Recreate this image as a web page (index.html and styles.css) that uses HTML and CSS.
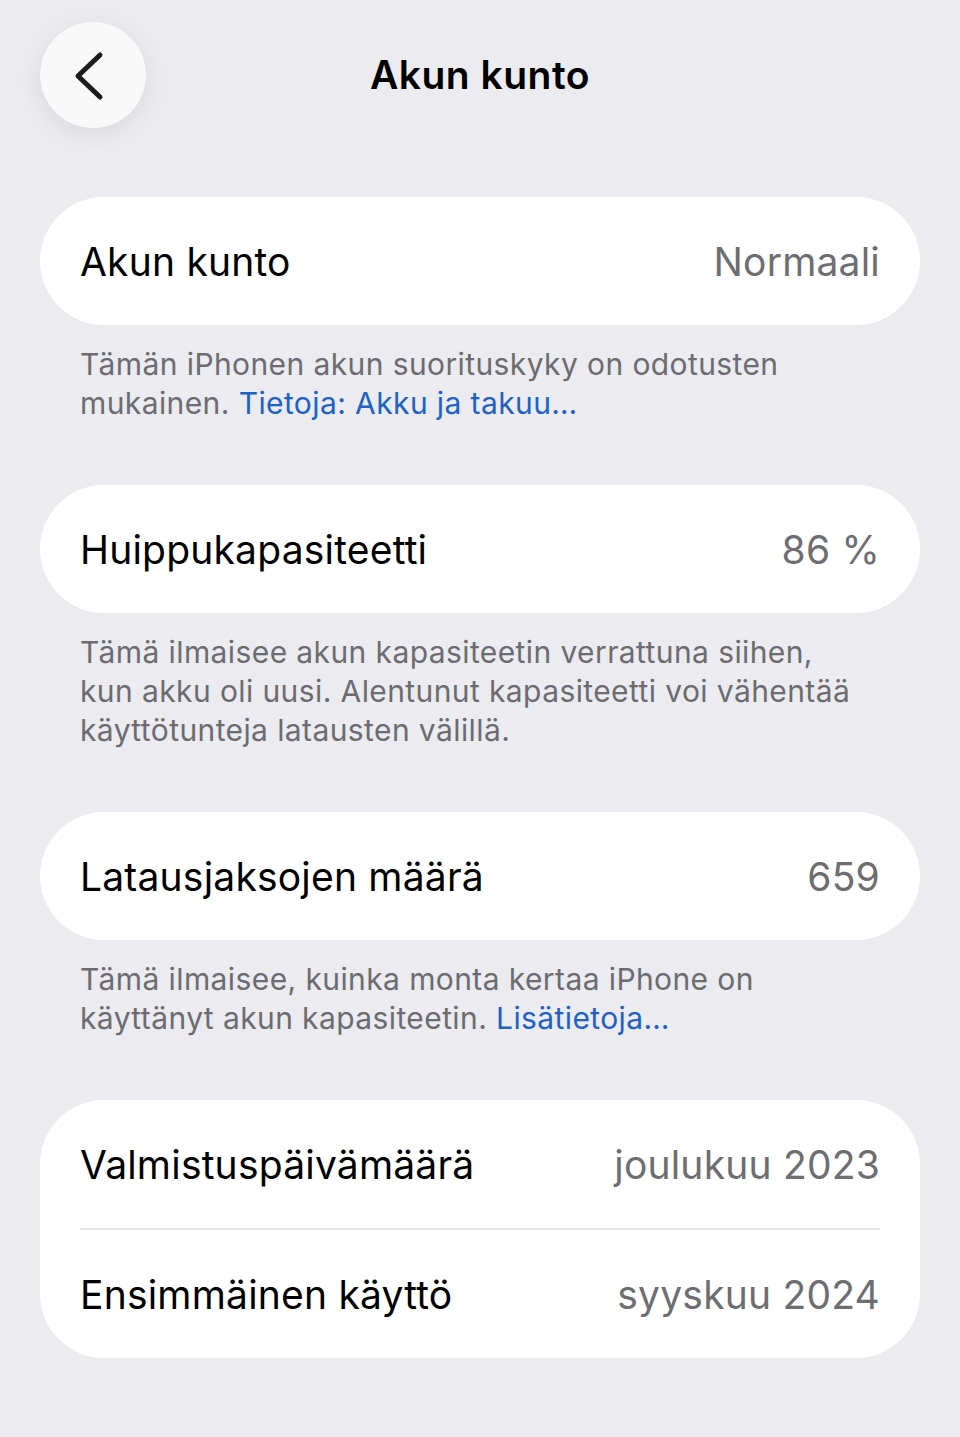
FILE: index.html
```html
<!DOCTYPE html>
<html lang="fi">
<head>
  <meta charset="UTF-8">
  <title>Akun kunto</title>
  <link rel="stylesheet" href="styles.css">
</head>
<body>
  <header class="nav">
    <button class="back" aria-label="Takaisin">
      <svg width="40" height="60" viewBox="0 0 40 60">
        <path d="M31 10 L9 31 L31 52" fill="none" stroke="#1c1c1e" stroke-width="5" stroke-linecap="round" stroke-linejoin="round"/>
      </svg>
    </button>
    <h1>Akun kunto</h1>
  </header>

  <main class="list">
    <section class="group">
      <div class="card">
        <div class="row">
          <span class="label">Akun kunto</span>
          <span class="value">Normaali</span>
        </div>
      </div>
      <p class="note">Tämän iPhonen akun suorituskyky on odotusten mukainen. <a href="#">Tietoja: Akku ja takuu…</a></p>
    </section>

    <section class="group">
      <div class="card">
        <div class="row">
          <span class="label">Huippukapasiteetti</span>
          <span class="value">86 %</span>
        </div>
      </div>
      <p class="note">Tämä ilmaisee akun kapasiteetin verrattuna siihen, kun akku oli uusi. Alentunut kapasiteetti voi vähentää käyttötunteja latausten välillä.</p>
    </section>

    <section class="group">
      <div class="card">
        <div class="row">
          <span class="label">Latausjaksojen määrä</span>
          <span class="value">659</span>
        </div>
      </div>
      <p class="note">Tämä ilmaisee, kuinka monta kertaa iPhone on käyttänyt akun kapasiteetin. <a href="#">Lisätietoja…</a></p>
    </section>

    <section class="group">
      <div class="card">
        <div class="row">
          <span class="label">Valmistuspäivämäärä</span>
          <span class="value">joulukuu 2023</span>
        </div>
        <div class="row">
          <span class="label">Ensimmäinen käyttö</span>
          <span class="value">syyskuu 2024</span>
        </div>
      </div>
    </section>
  </main>
</body>
</html>
```

FILE: styles.css
```css
* {
  margin: 0;
  padding: 0;
  box-sizing: border-box;
}

body {
  background-color: #ebebf0;
  color: #000;
  font-family: Inter, "Noto Sans", "Liberation Sans", sans-serif;
  min-height: 100vh;
}

.nav {
  position: relative;
  height: 150px;
  padding: 22px 40px 0;
}

.back {
  width: 106px;
  height: 106px;
  border: none;
  border-radius: 50%;
  background-color: #f9f9f9;
  box-shadow: 0 6px 28px rgba(0, 0, 0, 0.08);
  display: flex;
  align-items: center;
  justify-content: center;
  cursor: pointer;
}

.back svg {
  margin-left: -8px;
}

.nav h1 {
  position: absolute;
  top: 22px;
  left: 200px;
  right: 200px;
  height: 106px;
  line-height: 106px;
  text-align: center;
  font-size: 39px;
  font-weight: 600;
  letter-spacing: 0.5px;
  color: #000;
}

.list {
  padding: 47px 40px 0;
}

.group {
  margin-bottom: 62px;
}

.card {
  background-color: #fff;
  border-radius: 64px;
  padding: 0 40px;
}

.row {
  height: 128px;
  display: flex;
  align-items: center;
  justify-content: space-between;
  font-size: 39px;
  letter-spacing: 0.2px;
}

.row + .row {
  border-top: 2px solid #e3e3e6;
  height: 130px;
}

.value {
  color: #6d6d72;
}

.note {
  padding: 20px 60px 0 40px;
  font-size: 30px;
  line-height: 39px;
  color: #6c6c70;
  letter-spacing: 0.4px;
}

.note a {
  color: #1d62c4;
  text-decoration: none;
}
```
